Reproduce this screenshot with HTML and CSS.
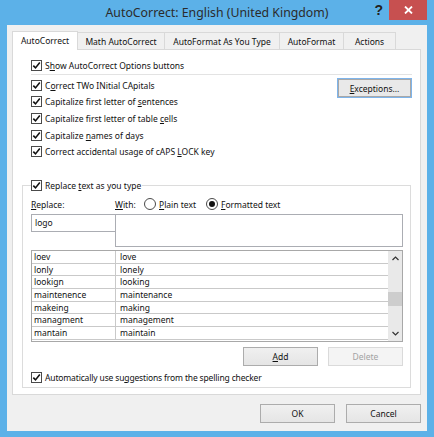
FILE: index.html
```html
<!DOCTYPE html>
<html>
<head>
<meta charset="utf-8">
<link rel="stylesheet" href="styles.css">
</head>
<body>
<div class="window">
  <div class="titlebar">
    <div class="tb-spacer"></div>
    <div class="title">AutoCorrect: English (United Kingdom)</div>
    <div class="controls">
      <span class="help">?</span>
      <span class="close"><svg width="9" height="8" viewBox="0 0 9 8"><path d="M1 0.5 L8 7.5 M8 0.5 L1 7.5" stroke="#fff" stroke-width="1.8"/></svg></span>
    </div>
  </div>
  <div class="client">
    <div class="tabs">
      <div class="tab active t1">AutoCorrect</div>
      <div class="tab t2">Math AutoCorrect</div>
      <div class="tab t3">AutoFormat As You Type</div>
      <div class="tab t4">AutoFormat</div>
      <div class="tab t5">Actions</div>
    </div>
    <div class="panel">
      <div class="cb-row top-row"><span class="box"><svg width="9" height="9" viewBox="0 0 9 9"><path d="M1.3 4.6 L3.5 6.9 L7.8 1.6" fill="none" stroke="#111" stroke-width="1.6"/></svg></span><span>S<u>h</u>ow AutoCorrect Options buttons</span></div>
      <div class="sep"></div>
      <div class="opts">
        <div class="optlist">
          <div class="cb-row"><span class="box"><svg width="9" height="9" viewBox="0 0 9 9"><path d="M1.3 4.6 L3.5 6.9 L7.8 1.6" fill="none" stroke="#111" stroke-width="1.6"/></svg></span><span>C<u>o</u>rrect TWo INitial CApitals</span></div>
          <div class="cb-row"><span class="box"><svg width="9" height="9" viewBox="0 0 9 9"><path d="M1.3 4.6 L3.5 6.9 L7.8 1.6" fill="none" stroke="#111" stroke-width="1.6"/></svg></span><span>Capitalize first letter of <u>s</u>entences</span></div>
          <div class="cb-row"><span class="box"><svg width="9" height="9" viewBox="0 0 9 9"><path d="M1.3 4.6 L3.5 6.9 L7.8 1.6" fill="none" stroke="#111" stroke-width="1.6"/></svg></span><span>Capitalize first letter of table <u>c</u>ells</span></div>
          <div class="cb-row"><span class="box"><svg width="9" height="9" viewBox="0 0 9 9"><path d="M1.3 4.6 L3.5 6.9 L7.8 1.6" fill="none" stroke="#111" stroke-width="1.6"/></svg></span><span>Capitalize <u>n</u>ames of days</span></div>
          <div class="cb-row"><span class="box"><svg width="9" height="9" viewBox="0 0 9 9"><path d="M1.3 4.6 L3.5 6.9 L7.8 1.6" fill="none" stroke="#111" stroke-width="1.6"/></svg></span><span>Correct accidental usage of cAPS <u>L</u>OCK key</span></div>
        </div>
        <div class="btn focus exc"><u>E</u>xceptions...</div>
      </div>
      <fieldset class="group">
        <legend class="legend"><span class="box"><svg width="9" height="9" viewBox="0 0 9 9"><path d="M1.3 4.6 L3.5 6.9 L7.8 1.6" fill="none" stroke="#111" stroke-width="1.6"/></svg></span><span>Replace <u>t</u>ext as you type</span></legend>
        <div class="labels">
          <span class="lbl-replace"><u>R</u>eplace:</span>
          <span class="lbl-with"><u>W</u>ith:</span>
          <span class="ropt plain"><span class="radio"></span><span><u>P</u>lain text</span></span>
          <span class="ropt"><span class="radio on"></span><span><u>F</u>ormatted text</span></span>
        </div>
        <div class="inputs">
          <div class="replace-box">logo</div>
          <div class="with-box"></div>
        </div>
        <div class="list">
          <div class="grid">
            <div class="c1">loev</div><div class="c2">love</div>
            <div class="c1">lonly</div><div class="c2">lonely</div>
            <div class="c1">lookign</div><div class="c2">looking</div>
            <div class="c1">maintenence</div><div class="c2">maintenance</div>
            <div class="c1">makeing</div><div class="c2">making</div>
            <div class="c1">managment</div><div class="c2">management</div>
            <div class="c1">mantain</div><div class="c2">maintain</div>
          </div>
          <div class="scrollbar">
            <span class="arrow"><svg width="7" height="5" viewBox="0 0 7 5"><path d="M0.5 4 L3.5 1 L6.5 4" fill="none" stroke="#333" stroke-width="1.2"/></svg></span>
            <span class="track"><span class="thumb"></span></span>
            <span class="arrow"><svg width="7" height="5" viewBox="0 0 7 5"><path d="M0.5 1 L3.5 4 L6.5 1" fill="none" stroke="#333" stroke-width="1.2"/></svg></span>
          </div>
        </div>
        <div class="listbtns">
          <div class="btn"><u>A</u>dd</div>
          <div class="btn disabled">Delete</div>
        </div>
        <div class="cb-row auto"><span class="box"><svg width="9" height="9" viewBox="0 0 9 9"><path d="M1.3 4.6 L3.5 6.9 L7.8 1.6" fill="none" stroke="#111" stroke-width="1.6"/></svg></span><span>Automatically use su<u>g</u>gestions from the spelling checker</span></div>
      </fieldset>
    </div>
    <div class="footer">
      <div class="btn">OK</div>
      <div class="btn">Cancel</div>
    </div>
  </div>
</div>
</body>
</html>
```

FILE: styles.css
```css
* { box-sizing: border-box; }
html, body { margin: 0; padding: 0; }
body {
  background: #5cb1e8;
  font-family: "Noto Sans", "Open Sans", sans-serif;
  font-size: 8.5px;
  color: #111;
}
u { text-decoration: underline; text-underline-offset: 1px; }
.window {
  width: 434px;
  height: 437px;
  background: #5cb1e8;
  display: flex;
  flex-direction: column;
}
.titlebar {
  height: 25px;
  display: grid;
  grid-template-columns: 1fr auto 1fr;
  align-items: start;
}
.title {
  font-size: 12.3px;
  color: #2b2b2b;
  line-height: 26px;
}
.controls {
  display: flex;
  justify-content: flex-end;
  align-items: flex-start;
  padding-right: 7px;
}
.help {
  font-family: "Liberation Sans", Arial, sans-serif;
  font-weight: bold;
  font-size: 14px;
  color: #222;
  line-height: 20px;
  margin-right: 6px;
}
.close {
  width: 38px;
  height: 20px;
  background: #c75050;
  display: flex;
  align-items: center;
  justify-content: center;
}
.client {
  margin: 0 7px 6px 7px;
  height: 406px;
  background: #f0f0f0;
  padding: 0 6px 0 5px;
  display: flex;
  flex-direction: column;
}
.tabs {
  display: flex;
  height: 25px;
  align-items: flex-end;
  position: relative;
  z-index: 1;
  margin-bottom: -1px;
}
.tab {
  height: 17px;
  margin-bottom: 1px;
  border: 1px solid #d9d9d9;
  border-bottom: none;
  margin-left: -1px;
  background: #f0f0f0;
  display: flex;
  align-items: center;
  justify-content: center;
  white-space: nowrap;
}
.tab.active {
  height: 19px;
  margin-bottom: 0;
  margin-left: 0;
  background: #fff;
  padding-bottom: 1px;
}
.t1 { width: 66px; }
.t2 { width: 88px; }
.t3 { width: 116px; }
.t4 { width: 65px; }
.t5 { width: 53px; }
.panel {
  height: 346px;
  background: #fff;
  border: 1px solid #d9d9d9;
  padding: 7px 8px 0 18px;
  display: flex;
  flex-direction: column;
}
.cb-row {
  display: flex;
  align-items: center;
  white-space: nowrap;
  height: 16.67px;
}
.top-row { height: 16px; }
.box {
  width: 11px;
  height: 11px;
  border: 1px solid #4a4a4a;
  background: #fff;
  display: inline-flex;
  align-items: center;
  justify-content: center;
  margin-right: 3px;
  flex: none;
}
.sep {
  height: 1px;
  background: #e3e3e3;
  margin: 1px 0 2px 0;
}
.opts {
  display: flex;
  justify-content: space-between;
  align-items: flex-start;
  height: 100px;
}
.btn {
  width: 75px;
  height: 19px;
  border: 1px solid #acacac;
  background: linear-gradient(#f0f0f0, #e5e5e5);
  display: flex;
  align-items: center;
  justify-content: center;
  white-space: nowrap;
}
.btn.focus {
  border-color: #7eb4ea;
  box-shadow: inset 0 0 0 1px #a8a8a8;
  background: #e9e9e9;
}
.exc { margin-top: 1px; height: 20px; }
.btn.disabled {
  background: #f4f4f4;
  border-color: #dadada;
  color: #a3a3a3;
}
.group {
  margin: 1px 0 0 -9px;
  width: 389px;
  border: 1px solid #dcdcdc;
  padding: 0 7px 3px 8px;
  min-width: 0;
}
.legend {
  display: flex;
  align-items: center;
  padding: 0 1px 0 0;
  margin-left: 0;
  height: 14px;
  white-space: nowrap;
}
.labels {
  display: flex;
  align-items: center;
  height: 14px;
  margin-top: 5px;
  white-space: nowrap;
}
.lbl-replace { width: 84px; }
.lbl-with { width: 29px; }
.ropt { display: flex; align-items: center; }
.ropt.plain { width: 62px; }
.radio {
  width: 12px;
  height: 12px;
  border: 1px solid #4a4a4a;
  border-radius: 50%;
  background: #fff;
  margin-right: 3px;
  display: inline-flex;
  align-items: center;
  justify-content: center;
  flex: none;
}
.radio.on::after {
  content: "";
  width: 6px;
  height: 6px;
  border-radius: 50%;
  background: #111;
}
.inputs {
  display: flex;
  margin-top: 3px;
  align-items: flex-start;
}
.replace-box {
  width: 85px;
  height: 18px;
  border: 1px solid #abadb3;
  padding: 1px 3px;
  line-height: 14px;
  margin-right: -1px;
}
.with-box {
  flex: 1;
  height: 33px;
  border: 1px solid #abadb3;
}
.list {
  margin-top: 3px;
  height: 92px;
  border: 1px solid #a8a8a8;
  display: flex;
  overflow: hidden;
}
.grid {
  flex: 1;
  display: grid;
  grid-template-columns: 84px 1fr;
  grid-auto-rows: 12.67px;
  align-content: start;
}
.c1, .c2 {
  border-bottom: 1px solid #c9c9c9;
  line-height: 11.67px;
  white-space: nowrap;
  overflow: hidden;
}
.c1 { padding-left: 2px; border-right: 1px solid #c9c9c9; }
.c2 { padding-left: 4px; }
.scrollbar {
  width: 14px;
  background: #e9e9e9;
  display: flex;
  flex-direction: column;
}
.arrow {
  height: 15px;
  display: flex;
  align-items: center;
  justify-content: center;
}
.track {
  flex: 1;
  display: flex;
  flex-direction: column;
  padding-top: 26px;
}
.thumb {
  height: 14px;
  background: #cdcdcd;
}
.listbtns {
  display: flex;
  justify-content: flex-end;
  gap: 10px;
  margin-top: 5px;
}
.auto {
  height: 14px;
  margin-top: 4px;
  letter-spacing: -0.15px;
}
.footer {
  display: flex;
  justify-content: flex-end;
  gap: 11px;
  margin-top: 9px;
}
```
